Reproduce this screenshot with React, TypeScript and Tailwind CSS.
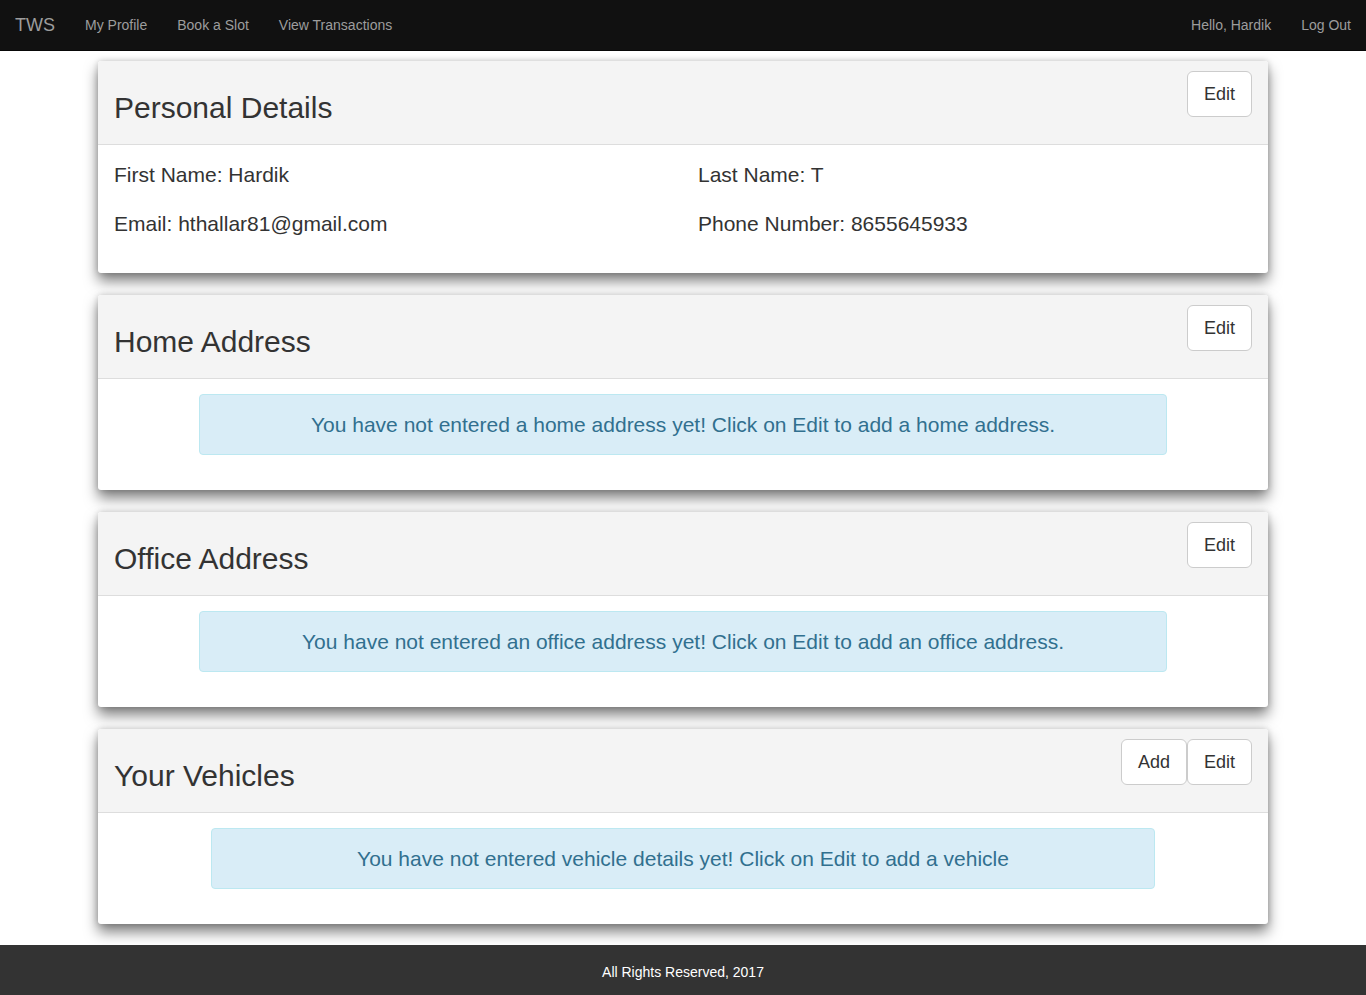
import React from "react";

const font = { fontFamily: '"Liberation Sans", Arial, Helvetica, sans-serif' };

function Btn({ label }: { label: string }) {
  return (
    <button className="h-[46px] px-[16px] bg-white border border-[#ccc] rounded-[6px] text-[18px] leading-[24px] text-[#333]">
      {label}
    </button>
  );
}

function CardHeader({ title, buttons }: { title: string; buttons: string[] }) {
  return (
    <div className="h-[84px] bg-[#f4f4f4] border-b border-[#ddd] rounded-t-[3px] flex items-start justify-between pl-[16px] pr-[16px]">
      <h2 className="mt-[30px] text-[30px] leading-[33px] text-[#333]">{title}</h2>
      <div className="mt-[10px] flex">
        {buttons.map((b) => (
          <Btn key={b} label={b} />
        ))}
      </div>
    </div>
  );
}

function Card({ children, className = "" }: { children: React.ReactNode; className?: string }) {
  return (
    <div
      className={
        "bg-white rounded-[3px] shadow-[0_8px_14px_rgba(0,0,0,0.5),0_0_6px_rgba(0,0,0,0.18)] " + className
      }
    >
      {children}
    </div>
  );
}

function Alert({ text, width }: { text: string; width: string }) {
  return (
    <div className="pt-[15px] flex justify-center">
      <div
        className={
          "h-[61px] pt-[1px] flex items-center justify-center bg-[#d9edf7] border border-[#bce8f1] rounded-[4px] text-[#31708f] text-[21px] " +
          width
        }
      >
        {text}
      </div>
    </div>
  );
}

export default function App() {
  return (
    <div style={font} className="w-[1366px] min-h-[995px] bg-white flex flex-col">
      <nav className="h-[51px] bg-[#111] border-b border-[#080808] flex items-center justify-between text-[#9d9d9d]">
        <div className="flex items-center">
          <span className="px-[15px] text-[18px] leading-[20px]">TWS</span>
          <span className="px-[15px] text-[14px]">My Profile</span>
          <span className="px-[15px] text-[14px]">Book a Slot</span>
          <span className="px-[15px] text-[14px]">View Transactions</span>
        </div>
        <div className="flex items-center">
          <span className="px-[15px] text-[14px]">Hello, Hardik</span>
          <span className="px-[15px] text-[14px]">Log Out</span>
        </div>
      </nav>

      <main className="w-[1170px] mx-auto pt-[10px] pb-[21px] flex flex-col gap-[22px]">
        <Card className="h-[212px]">
          <CardHeader title="Personal Details" buttons={["Edit"]} />
          <div className="grid grid-cols-2 pt-[18px] text-[21px] text-[#333] leading-[24px]">
            <div className="pl-[16px] flex flex-col gap-[25px]">
              <div>First Name: Hardik</div>
              <div>Email: hthallar81@gmail.com</div>
            </div>
            <div className="pl-[15px] flex flex-col gap-[25px]">
              <div>Last Name: T</div>
              <div>Phone Number: 8655645933</div>
            </div>
          </div>
        </Card>

        <Card className="h-[195px]">
          <CardHeader title="Home Address" buttons={["Edit"]} />
          <Alert
            width="w-[968px]"
            text="You have not entered a home address yet! Click on Edit to add a home address."
          />
        </Card>

        <Card className="h-[195px]">
          <CardHeader title="Office Address" buttons={["Edit"]} />
          <Alert
            width="w-[968px]"
            text="You have not entered an office address yet! Click on Edit to add an office address."
          />
        </Card>

        <Card className="h-[195px]">
          <CardHeader title="Your Vehicles" buttons={["Add", "Edit"]} />
          <Alert
            width="w-[944px]"
            text="You have not entered vehicle details yet! Click on Edit to add a vehicle"
          />
        </Card>
      </main>

      <footer className="mt-auto h-[50px] pt-[4px] bg-[#333] flex items-center justify-center text-[14px] text-white">
        All Rights Reserved, 2017
      </footer>
    </div>
  );
}
